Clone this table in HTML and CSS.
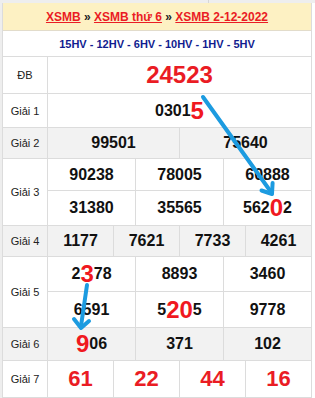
FILE: index.html
```html
<!DOCTYPE html>
<html>
<head>
<meta charset="utf-8">
<link rel="stylesheet" href="styles.css">
</head>
<body>
<div class="topbar"><span class="tabline"></span></div>
<div class="frame">
<div class="board">
  <div class="head"><a href="#">XSMB</a> » <a href="#">XSMB thứ 6</a> » <a href="#">XSMB 2-12-2022</a></div>
  <div class="hv">15HV - 12HV - 6HV - 10HV - 1HV - 5HV</div>

  <div class="row h-db">
    <div class="lbl">ĐB</div>
    <div class="stack"><div class="cells"><div class="c"><span class="db">24523</span></div></div></div>
  </div>

  <div class="row h-g1">
    <div class="lbl">Giải 1</div>
    <div class="stack"><div class="cells"><div class="c">0301<span class="hi">5</span></div></div></div>
  </div>

  <div class="row h-g2 grey">
    <div class="lbl">Giải 2</div>
    <div class="stack"><div class="cells"><div class="c">99501</div><div class="c">75640</div></div></div>
  </div>

  <div class="row">
    <div class="lbl">Giải 3</div>
    <div class="stack">
      <div class="cells sub h-g3a"><div class="c">90238</div><div class="c">78005</div><div class="c">60888</div></div>
      <div class="cells h-g3b"><div class="c">31380</div><div class="c">35565</div><div class="c">562<span class="hi">0</span>2</div></div>
    </div>
  </div>

  <div class="row h-g4 grey">
    <div class="lbl">Giải 4</div>
    <div class="stack"><div class="cells"><div class="c">1177</div><div class="c">7621</div><div class="c">7733</div><div class="c">4261</div></div></div>
  </div>

  <div class="row">
    <div class="lbl">Giải 5</div>
    <div class="stack">
      <div class="cells sub h-g5"><div class="c">2<span class="hi">3</span>78</div><div class="c">8893</div><div class="c">3460</div></div>
      <div class="cells h-g5"><div class="c">6591</div><div class="c">5<span class="hi">20</span>5</div><div class="c">9778</div></div>
    </div>
  </div>

  <div class="row h-g6 grey">
    <div class="lbl">Giải 6</div>
    <div class="stack"><div class="cells"><div class="c"><span class="hi">9</span>06</div><div class="c">371</div><div class="c">102</div></div></div>
  </div>

  <div class="row h-g7">
    <div class="lbl">Giải 7</div>
    <div class="stack"><div class="cells"><div class="c"><span class="g7">61</span></div><div class="c"><span class="g7">22</span></div><div class="c"><span class="g7">44</span></div><div class="c"><span class="g7">16</span></div></div></div>
  </div>
</div>
</div>

<svg class="arrows" width="315" height="398" viewBox="0 0 315 398">
  <g stroke="#1c9be0" stroke-width="4" stroke-linecap="round" stroke-linejoin="round" fill="none">
    <line x1="203" y1="97" x2="271" y2="192"/>
    <polyline points="261.5,190.5 272,194 272.6,183"/>
    <line x1="87" y1="285" x2="81" y2="326"/>
    <polyline points="74,319 81,328 89,321"/>
  </g>
</svg>
</body>
</html>
```

FILE: styles.css
```css
* { box-sizing: border-box; }

body {
  margin: 0;
  background: #ffffff;
  font-family: "Liberation Sans", Arial, sans-serif;
  color: #111;
  position: relative;
  width: 315px;
  height: 398px;
  overflow: hidden;
}

.topbar {
  height: 3px;
  background: #eeeeee;
  display: flex;
  padding-left: 208px;
}

.tabline {
  width: 1px;
  background: #d6d6d6;
}

.frame {
  border-left: 2px solid #eeeeee;
  width: 312px;
}

.board {
  border-left: 1px solid #dcdcdc;
  border-right: 1px solid #dcdcdc;
  border-bottom: 1px solid #dcdcdc;
  width: 310px;
}

.head {
  height: 28px;
  background: #fdf1c3;
  border-bottom: 1px solid #e2dccb;
  display: flex;
  align-items: center;
  justify-content: center;
  font-size: 12px;
  font-weight: bold;
  color: #222;
  white-space: pre;
}

.head a {
  color: #ea1c24;
  text-decoration: underline;
}

.hv {
  height: 26px;
  border-bottom: 1px solid #dcdcdc;
  display: flex;
  align-items: center;
  justify-content: center;
  font-size: 11px;
  font-weight: bold;
  color: #111c8f;
}

.row {
  display: flex;
  border-bottom: 1px solid #dcdcdc;
}

.row.grey { background: #f2f2f2; }

.lbl {
  width: 45px;
  flex: none;
  border-right: 1px solid #dcdcdc;
  display: flex;
  align-items: center;
  justify-content: center;
  font-size: 11px;
  color: #222;
}

.stack {
  flex: 1;
  display: flex;
  flex-direction: column;
}

.cells {
  flex: 1;
  display: flex;
}

.cells.sub { border-bottom: 1px solid #dcdcdc; }

.c {
  flex: 1;
  display: flex;
  align-items: center;
  justify-content: center;
  font-size: 16px;
  font-weight: bold;
  color: #111;
}

.c + .c { border-left: 1px solid #dcdcdc; }

.hi {
  color: #f01820;
  font-size: 24px;
  line-height: 1;
}

.db {
  color: #ea1c24;
  font-size: 24px;
}

.g7 {
  color: #ea1c24;
  font-size: 22px;
}

.h-db { height: 37px; }
.h-g1 { height: 34px; }
.h-g2 { height: 31px; }
.h-g3a { height: 32px; flex: none; }
.h-g3b { height: 34px; flex: none; }
.h-g4 { height: 31px; }
.h-g5 { height: 35px; flex: none; }
.h-g6 { height: 33px; }
.h-g7 { height: 37px; }

.arrows {
  position: absolute;
  left: 0;
  top: 0;
  pointer-events: none;
}
```
